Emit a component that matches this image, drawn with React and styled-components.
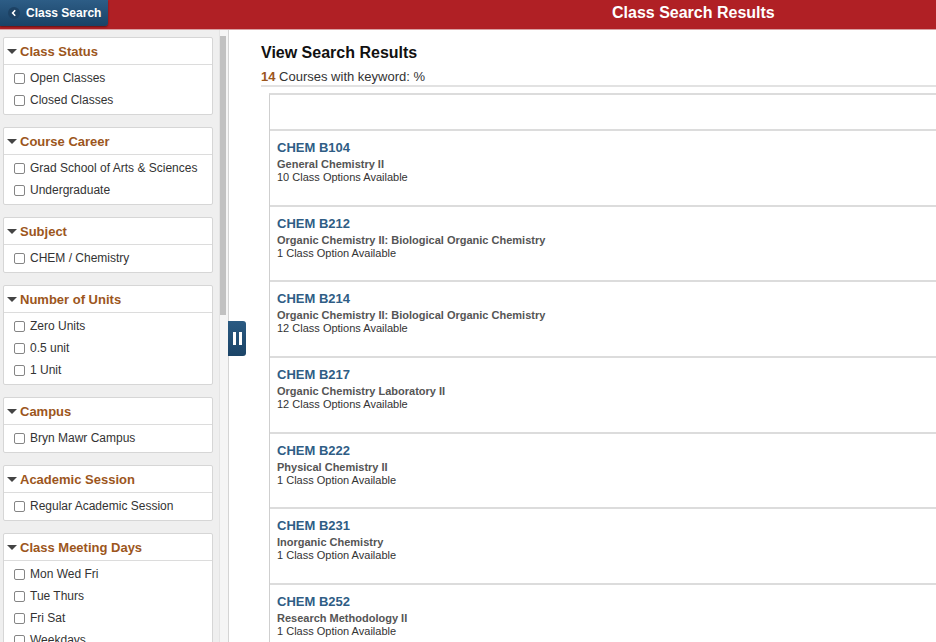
import React from 'react';
import styled, { createGlobalStyle } from 'styled-components';

const GlobalStyle = createGlobalStyle`
  html, body {
    margin: 0;
    padding: 0;
    height: 100%;
    overflow: hidden;
  }
  body {
    font-family: 'Liberation Sans', Arial, Helvetica, sans-serif;
    color: #333;
    background: #fff;
  }
`;

const Page = styled.div`
  display: flex;
  flex-direction: column;
  height: 100vh;
`;

const Banner = styled.header`
  flex: 0 0 auto;
  height: 29px;
  display: flex;
  align-items: flex-start;
  background: #b02025;
  border-bottom: 1px solid #d9a0a2;
`;

const BackButton = styled.button`
  display: flex;
  align-items: center;
  gap: 6px;
  height: 26px;
  width: 108px;
  padding: 0 0 0 8px;
  border: none;
  border-radius: 0 0 3px 0;
  background: linear-gradient(#2d5d86, #1a4266);
  box-shadow: 0 1px 2px rgba(0, 0, 0, 0.45);
  color: #fff;
  font-family: inherit;
  font-size: 12px;
  font-weight: bold;
  cursor: pointer;
`;

const BackIcon = styled.span`
  display: flex;
  align-items: center;
  justify-content: center;
  width: 12px;
  height: 12px;
  border-radius: 50%;
  background: #1d4264;
`;

const Title = styled.h1`
  margin: 0 0 0 504px;
  line-height: 25px;
  font-size: 16px;
  font-weight: bold;
  color: #fff;
`;

const Body = styled.div`
  position: relative;
  flex: 1;
  display: flex;
  min-height: 0;
`;

const Sidebar = styled.aside`
  flex: 0 0 229px;
  box-sizing: border-box;
  display: flex;
  background: #efefef;
  border-right: 1px solid #d4d4d4;
`;

const FilterColumn = styled.div`
  flex: 1;
  min-width: 0;
  overflow: hidden;
  padding: 7px 6px 0 3px;
  display: flex;
  flex-direction: column;
  gap: 12px;
`;

const ScrollTrack = styled.div`
  flex: 0 0 9px;
  box-sizing: border-box;
  padding-top: 6px;
  background: #f5f5f5;
  border-left: 1px solid #e4e4e4;
`;

const ScrollThumb = styled.div`
  width: 6px;
  height: 279px;
  background: #c1c1c1;
`;

const FilterCard = styled.section`
  flex: 0 0 auto;
  background: #fff;
  border: 1px solid #d6d6d6;
  border-radius: 2px;
`;

const FilterHead = styled.div`
  display: flex;
  align-items: center;
  gap: 3px;
  height: 26px;
  padding-left: 3px;
  border-bottom: 1px solid #dcdcdc;
  color: #9c561c;
  font-size: 13px;
  font-weight: bold;
`;

const Caret = styled.span`
  width: 0;
  height: 0;
  border-left: 5px solid transparent;
  border-right: 5px solid transparent;
  border-top: 5px solid #444;
  margin-top: 1px;
`;

const FilterBody = styled.div`
  padding: 2px 0 3px 10px;
`;

const Option = styled.label`
  display: flex;
  align-items: center;
  gap: 5px;
  height: 22px;
  font-size: 12px;
  color: #333;
`;

const Box = styled.span`
  box-sizing: border-box;
  width: 11px;
  height: 11px;
  border: 1px solid #858585;
  border-radius: 2px;
  background: #fff;
`;

const Collapse = styled.button`
  position: absolute;
  left: 228px;
  top: 291px;
  width: 18px;
  height: 35px;
  padding: 0;
  border: none;
  border-radius: 0 3px 3px 0;
  background: linear-gradient(#2a5a82, #1b4467);
  display: flex;
  align-items: center;
  justify-content: center;
  gap: 3px;
  cursor: pointer;
`;

const Bar = styled.span`
  width: 3px;
  height: 13px;
  background: #fff;
`;

const Main = styled.main`
  flex: 1;
  min-width: 0;
  padding: 13px 0 0 32px;
  overflow: hidden;
`;

const Heading = styled.h2`
  margin: 0;
  line-height: 19px;
  font-size: 16px;
  font-weight: bold;
  color: #111;
`;

const Summary = styled.div`
  margin-top: 7px;
  line-height: 16px;
  font-size: 13px;
  color: #333;
  border-bottom: 2px solid #e2e2e2;

  b {
    color: #9c561c;
  }
`;

const ResultList = styled.div`
  margin: 6px 0 0 8px;
  border-left: 1px solid #cfcfcf;
  border-top: 2px solid #dcdcdc;
`;

const Spacer = styled.div`
  height: 34px;
`;

const Row = styled.div`
  box-sizing: border-box;
  height: 75.67px;
  padding: 9px 0 0 7px;
  border-top: 2px solid #dcdcdc;
`;

const Code = styled.div`
  line-height: 16px;
  font-size: 13px;
  font-weight: bold;
  color: #2f5d85;
  margin-bottom: 2px;
`;

const CourseName = styled.div`
  line-height: 13px;
  font-size: 11px;
  font-weight: bold;
  color: #555;
`;

const Options = styled.div`
  line-height: 13px;
  font-size: 11px;
  color: #333;
`;

const filters = [
  { title: 'Class Status', items: ['Open Classes', 'Closed Classes'] },
  { title: 'Course Career', items: ['Grad School of Arts & Sciences', 'Undergraduate'] },
  { title: 'Subject', items: ['CHEM / Chemistry'] },
  { title: 'Number of Units', items: ['Zero Units', '0.5 unit', '1 Unit'] },
  { title: 'Campus', items: ['Bryn Mawr Campus'] },
  { title: 'Academic Session', items: ['Regular Academic Session'] },
  { title: 'Class Meeting Days', items: ['Mon Wed Fri', 'Tue Thurs', 'Fri Sat', 'Weekdays'] },
];

const courses = [
  { code: 'CHEM B104', name: 'General Chemistry II', count: 10 },
  { code: 'CHEM B212', name: 'Organic Chemistry II: Biological Organic Chemistry', count: 1 },
  { code: 'CHEM B214', name: 'Organic Chemistry II: Biological Organic Chemistry', count: 12 },
  { code: 'CHEM B217', name: 'Organic Chemistry Laboratory II', count: 12 },
  { code: 'CHEM B222', name: 'Physical Chemistry II', count: 1 },
  { code: 'CHEM B231', name: 'Inorganic Chemistry', count: 1 },
  { code: 'CHEM B252', name: 'Research Methodology II', count: 1 },
];

export default function App() {
  return (
    <Page>
      <GlobalStyle />
      <Banner>
        <BackButton>
          <BackIcon>
            <svg width="8" height="8" viewBox="0 0 8 8">
              <path d="M5.2 1.2 L2.6 4 L5.2 6.8" stroke="#fff" strokeWidth="1.6" fill="none" />
            </svg>
          </BackIcon>
          Class Search
        </BackButton>
        <Title>Class Search Results</Title>
      </Banner>
      <Body>
        <Sidebar>
          <FilterColumn>
            {filters.map((f) => (
              <FilterCard key={f.title}>
                <FilterHead>
                  <Caret />
                  {f.title}
                </FilterHead>
                <FilterBody>
                  {f.items.map((it) => (
                    <Option key={it}>
                      <Box />
                      {it}
                    </Option>
                  ))}
                </FilterBody>
              </FilterCard>
            ))}
          </FilterColumn>
          <ScrollTrack>
            <ScrollThumb />
          </ScrollTrack>
        </Sidebar>
        <Collapse aria-label="Collapse filters">
          <Bar />
          <Bar />
        </Collapse>
        <Main>
          <Heading>View Search Results</Heading>
          <Summary>
            <b>14</b> Courses with keyword: %
          </Summary>
          <ResultList>
            <Spacer />
            {courses.map((c) => (
              <Row key={c.code}>
                <Code>{c.code}</Code>
                <CourseName>{c.name}</CourseName>
                <Options>
                  {c.count} Class {c.count === 1 ? 'Option' : 'Options'} Available
                </Options>
              </Row>
            ))}
          </ResultList>
        </Main>
      </Body>
    </Page>
  );
}
